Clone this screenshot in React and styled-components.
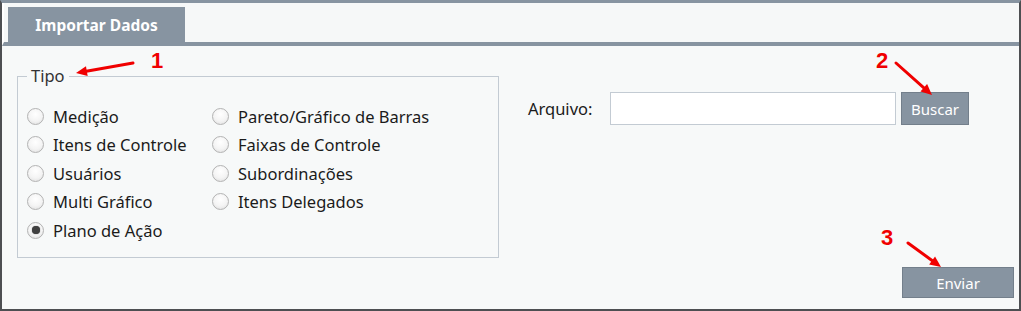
import React from "react";
import styled, { createGlobalStyle } from "styled-components";

const Global = createGlobalStyle`
  html, body { margin: 0; padding: 0; background: #ffffff; }
  * { box-sizing: border-box; }
  body { font-family: "Noto Sans", "Open Sans", sans-serif; }
`;

const Frame = styled.div`
  position: relative;
  width: 1021px;
  height: 311px;
  border-left: 2px solid #4d4f52;
  border-right: 2px solid #4d4f52;
  border-bottom: 2px solid #4d4f52;
  border-top: 3px solid #8794a1;
  background: #f7f9f9;
  display: flex;
  flex-direction: column;
`;

const TabBar = styled.div`
  display: flex;
  align-items: flex-end;
  height: 43px;
  padding: 4px 0 0 4px;
  background: #f6f8f8;
  border-bottom: 4px solid #8794a1;
  border-left: 2px solid #ffffff;
`;

const Tab = styled.div`
  width: 177px;
  height: 35px;
  background: #8794a1;
  color: #ffffff;
  font-weight: 700;
  font-size: 15.5px;
  display: flex;
  align-items: center;
  justify-content: center;
`;

const Content = styled.div`
  flex: 1;
  display: flex;
  flex-direction: column;
  padding: 20px 5px 11px 15px;
`;

const TopRow = styled.div`
  display: flex;
  align-items: flex-start;
`;

const Fieldset = styled.fieldset`
  width: 482px;
  margin: 0;
  padding: 16px 9px 12px 9px;
  border: 1px solid #c3cbd3;
  min-width: 0;
`;

const Legend = styled.legend`
  padding: 0 4px;
  font-size: 16.5px;
  line-height: 20px;
  color: #333;
`;

const RadioGrid = styled.div`
  display: grid;
  grid-template-columns: 185px 1fr;
  grid-auto-flow: column;
  grid-template-rows: repeat(5, 28.5px);
`;

const RadioItem = styled.label`
  display: flex;
  align-items: center;
  gap: 9px;
  font-size: 16.5px;
  color: #1b1b1b;
  white-space: nowrap;
`;

const Circle = styled.span`
  width: 17px;
  height: 17px;
  border-radius: 50%;
  border: 1px solid #b3b3b3;
  background: radial-gradient(circle at 50% 35%, #ffffff 0%, #f4f4f4 55%, #dcdcdc 100%);
  display: flex;
  align-items: center;
  justify-content: center;
  flex: none;

  &::after {
    content: "";
    width: 8px;
    height: 8px;
    border-radius: 50%;
    background: #404040;
    box-shadow: 0 0 1px #404040;
    display: ${(p) => (p.$checked ? "block" : "none")};
  }
`;

const FileRow = styled.div`
  display: flex;
  align-items: center;
  margin-left: 29px;
  margin-top: 26px;
`;

const Label = styled.span`
  width: 82px;
  font-size: 16.5px;
  color: #1b1b1b;
`;

const Input = styled.div`
  width: 286px;
  height: 33px;
  background: #ffffff;
  border: 1px solid #c3cbd3;
`;

const Button = styled.button`
  font-family: "Noto Sans", "Open Sans", sans-serif;
  font-size: 15px;
  color: #ffffff;
  background: #8794a1;
  border: 1px solid #737f8b;
  width: ${(p) => p.$w}px;
  height: ${(p) => p.$h}px;
  margin-left: ${(p) => p.$ml || 0}px;
  padding: 0;
  cursor: pointer;
`;

const Footer = styled.div`
  margin-top: auto;
  display: flex;
  justify-content: flex-end;
`;

const Overlay = styled.svg`
  position: absolute;
  left: -2px;
  top: -3px;
  width: 1021px;
  height: 311px;
  pointer-events: none;
`;

const Num = styled.text`
  font-family: "Liberation Sans", Arial, sans-serif;
  font-weight: 700;
  font-size: 22px;
  fill: #f00000;
`;

const Arrow = ({ x1, y1, x2, y2 }) => {
  const dx = x2 - x1;
  const dy = y2 - y1;
  const len = Math.hypot(dx, dy);
  const ux = dx / len;
  const uy = dy / len;
  const hl = 11;
  const hw = 5;
  const bx = x2 - ux * hl;
  const by = y2 - uy * hl;
  const pts = `${x2},${y2} ${bx - uy * hw},${by + ux * hw} ${bx + uy * hw},${by - ux * hw}`;
  return (
    <g>
      <line x1={x1} y1={y1} x2={bx + ux * 2} y2={by + uy * 2} stroke="#f00000" strokeWidth="3" strokeLinecap="round" />
      <polygon points={pts} fill="#f00000" />
    </g>
  );
};

const col1 = [
  { label: "Medição" },
  { label: "Itens de Controle" },
  { label: "Usuários" },
  { label: "Multi Gráfico" },
  { label: "Plano de Ação", checked: true },
];
const col2 = [
  { label: "Pareto/Gráfico de Barras" },
  { label: "Faixas de Controle" },
  { label: "Subordinações" },
  { label: "Itens Delegados" },
];

export default function App() {
  return (
    <>
      <Global />
      <Frame>
        <TabBar>
          <Tab>Importar Dados</Tab>
        </TabBar>
        <Content>
          <TopRow>
            <Fieldset>
              <Legend>Tipo</Legend>
              <RadioGrid>
                {[...col1, ...col2].map((o) => (
                  <RadioItem key={o.label}>
                    <Circle $checked={o.checked} />
                    {o.label}
                  </RadioItem>
                ))}
              </RadioGrid>
            </Fieldset>
            <FileRow>
              <Label>Arquivo:</Label>
              <Input />
              <Button $w={68} $h={33} $ml={5}>Buscar</Button>
            </FileRow>
          </TopRow>
          <Footer>
            <Button $w={112} $h={31}>Enviar</Button>
          </Footer>
        </Content>
        <Overlay viewBox="0 0 1021 311">
          <Num x="151" y="68">1</Num>
          <Arrow x1={133} y1={63} x2={76} y2={73} />
          <Num x="876" y="68">2</Num>
          <Arrow x1={896} y1={63} x2={932} y2={95} />
          <Num x="881" y="245">3</Num>
          <Arrow x1={908} y1={243} x2={941} y2={267} />
        </Overlay>
      </Frame>
    </>
  );
}
